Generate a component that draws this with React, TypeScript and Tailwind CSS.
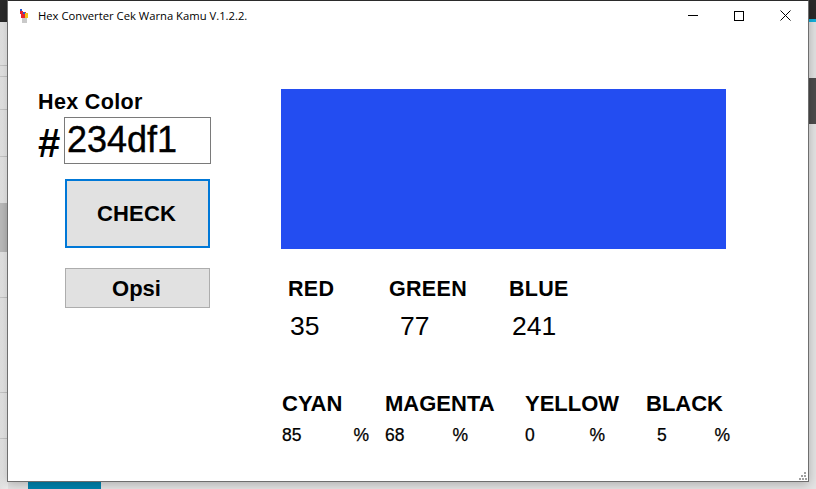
const sans = "font-['Liberation_Sans',Arial,sans-serif]";

function LeftStrip() {
  return (
    <div className="relative w-[8px] h-full flex flex-col bg-gradient-to-r from-[#e2e2e2] to-[#f0f0f0]">
      <div className="h-[22px] bg-[#2b2b2b]" />
      <div className="h-[44px] border-b border-[#c8c8c8]" />
      <div className="h-[11px] border-b border-[#c8c8c8]" />
      <div className="h-[33px] border-b border-[#c8c8c8]" />
      <div className="h-[47px] border-b border-[#c8c8c8]" />
      <div className="h-[46px]" />
      <div className="h-[49px] bg-[#bcbcbc]" />
      <div className="h-[46px] border-b border-[#c8c8c8]" />
      <div className="h-[95px] border-b border-[#c8c8c8]" />
      <div className="h-[46px] border-b border-[#c8c8c8]" />
    </div>
  );
}

function RightStrip() {
  return (
    <div className="w-[8px] h-full flex flex-col bg-[#e4e4e4]">
      <div className="h-[19px] bg-[#2b2b2b]" />
      <div className="h-[3px] bg-[#12b0dc]" />
      <div className="h-[56px] bg-[#e2e2e2]" />
      <div className="h-[46px] bg-[#4c4c4c]" />
    </div>
  );
}

function WindowIcon() {
  return (
    <svg width="8" height="14" viewBox="0 0 8 14" className="block" shapeRendering="crispEdges">
      <rect x="0" y="0" width="2" height="2" fill="#2a5bd0" />
      <rect x="0" y="2" width="3" height="3" fill="#e8242c" />
      <rect x="1" y="3" width="5" height="6" fill="#e8242c" />
      <rect x="3" y="3" width="2" height="2" fill="#2a5bd0" />
      <rect x="5" y="4" width="3" height="5" fill="#f2c21a" />
      <rect x="2" y="9" width="5" height="5" fill="#c9c9c9" />
    </svg>
  );
}

function TitleBar() {
  return (
    <div className="h-[29px] flex items-center">
      <div className="ml-[12px] w-[18px]">
        <WindowIcon />
      </div>
      <span className="text-[11.25px] leading-none text-black font-['Open_Sans',sans-serif]">
        Hex Converter Cek Warna Kamu V.1.2.2.
      </span>
      <div className="ml-auto flex h-full">
        <div className="w-[46px] flex items-center justify-center">
          <div className="w-[10px] h-px bg-black" />
        </div>
        <div className="w-[46px] flex items-center justify-center">
          <div className="w-[10px] h-[10px] border border-black" />
        </div>
        <div className="w-[46px] flex items-center justify-center">
          <svg width="11" height="11" viewBox="0 0 11 11" fill="none" stroke="#000" strokeWidth="1">
            <path d="M0.5 0.5L10.5 10.5M10.5 0.5L0.5 10.5" />
          </svg>
        </div>
      </div>
    </div>
  );
}

function LeftPanel() {
  return (
    <div className="w-[243px] pt-[60px] flex flex-col">
      <div className="h-[24px] leading-[24px] text-[21.5px] font-bold tracking-[0.35px] text-black">Hex Color</div>
      <div className="mt-[3px] h-[47px] flex items-start">
        <span className="w-[26px] h-[47px] pt-[4px] text-[40px] leading-[44px] font-bold text-black">#</span>
        <input
          readOnly
          value="234df1"
          className="w-[147px] h-[47px] pl-[2px] pb-[1px] border border-[#7a7a7a] bg-white text-[36px] text-black outline-none [-webkit-text-stroke:0.4px_black]"
        />
      </div>
      <button className="mt-[15px] ml-[27px] w-[145px] h-[69px] pr-[2px] border-2 border-[#0078d7] bg-[#e1e1e1] text-[22px] font-bold tracking-[0.2px] text-black">
        CHECK
      </button>
      <button className="mt-[20px] ml-[27px] w-[145px] h-[40px] pr-[2px] border border-[#adadad] bg-[#e1e1e1] text-[22px] font-bold text-black">
        Opsi
      </button>
    </div>
  );
}

function RgbRows() {
  return (
    <div className="mt-[29px] pl-[7px]">
      <div className="grid grid-cols-[101px_120px_1fr] h-[22px] leading-[22px] text-[21.5px] font-bold tracking-[0.3px] text-black">
        <span>RED</span>
        <span>GREEN</span>
        <span>BLUE</span>
      </div>
      <div className="mt-[11px] grid grid-cols-[101px_121px_1fr] h-[30px] leading-[30px] text-[26.5px] text-black">
        <span className="pl-[2px]">35</span>
        <span className="pl-[11px]">77</span>
        <span className="pl-[2px]">241</span>
      </div>
    </div>
  );
}

function CmykRows() {
  return (
    <div className="mt-[51px] pl-[1px]">
      <div className="grid grid-cols-[103px_140px_121px_1fr] h-[24px] leading-[24px] text-[22px] font-bold text-black">
        <span>CYAN</span>
        <span>MAGENTA</span>
        <span>YELLOW</span>
        <span>BLACK</span>
      </div>
      <div className="mt-[9px] grid grid-cols-[103px_140px_121px_1fr] h-[20px] leading-[20px] text-[17.5px] text-black [-webkit-text-stroke:0.25px_black]">
        <div className="w-[87px] flex justify-between">
          <span>85</span>
          <span>%</span>
        </div>
        <div className="w-[83px] flex justify-between">
          <span>68</span>
          <span>%</span>
        </div>
        <div className="w-[80px] flex justify-between">
          <span>0</span>
          <span>%</span>
        </div>
        <div className="w-[84px] flex justify-between pl-[11px]">
          <span>5</span>
          <span>%</span>
        </div>
      </div>
    </div>
  );
}

export default function App() {
  return (
    <div className={`relative w-[816px] h-[489px] overflow-hidden bg-[#e4e4e4] ${sans}`}>
      <div className="flex justify-between h-full">
        <LeftStrip />
        <RightStrip />
      </div>
      <div className="absolute bottom-0 left-[28px] w-[73px] h-[8px] bg-[#0083ad]" />
      <div className="absolute left-[7px] top-0 w-[802px] h-[482px] border border-[#6e6e6e] border-t-[#2b2b2b] bg-white shadow-[0_2px_10px_rgba(0,0,0,0.25)] flex flex-col">
        <TitleBar />
        <div className="flex pl-[30px]">
          <LeftPanel />
          <div className="w-[445px] pt-[59px]">
            <div className="h-[160px] bg-[#234df1]" />
            <RgbRows />
            <CmykRows />
          </div>
        </div>
        <svg width="8" height="8" viewBox="0 0 8 8" className="absolute right-[1px] bottom-[1px]" fill="#a0a0a0" shapeRendering="crispEdges">
          <rect x="5" y="0" width="2" height="2" />
          <rect x="2" y="3" width="2" height="2" />
          <rect x="5" y="3" width="2" height="2" />
          <rect x="0" y="6" width="2" height="2" />
          <rect x="3" y="6" width="2" height="2" />
          <rect x="6" y="6" width="2" height="2" />
        </svg>
      </div>
    </div>
  );
}
